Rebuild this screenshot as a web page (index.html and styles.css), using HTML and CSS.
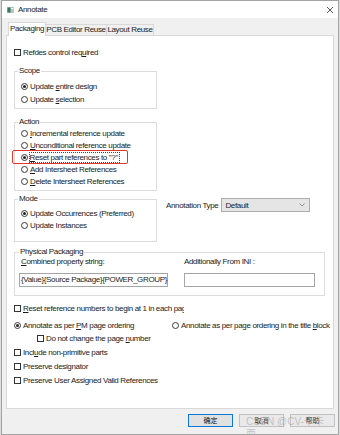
FILE: index.html
```html
<!DOCTYPE html>
<html lang="en">
<head>
    <meta charset="UTF-8">
    <title>Annotate</title>
    <link rel="stylesheet" href="styles.css">
</head>
<body>
    <div class="window">
        <div class="titlebar">
            <svg class="app-icon" width="7" height="6" viewBox="0 0 7 6">
                <rect x="0" y="0" width="7" height="6" fill="#b9c2c6"/>
                <rect x="0.5" y="0.5" width="3" height="5" fill="#2f7d62"/>
                <rect x="4" y="1" width="2.5" height="1" fill="#ffffff"/>
            </svg>
            <span class="title">Annotate</span>
            <svg class="close" width="8" height="8" viewBox="0 0 8 8">
                <path d="M1 1 L7 7 M7 1 L1 7" stroke="#444" stroke-width="0.9"/>
            </svg>
        </div>

        <div class="tabs">
            <div class="tab active">Packaging</div>
            <div class="tab tab-pcb">PCB Editor Reuse</div>
            <div class="tab tab-layout">Layout Reuse</div>
        </div>

        <div class="panel">
            <label class="opt refdes"><span class="box"></span><span>Refdes control req<u>u</u>ired</span></label>

            <fieldset class="group scope">
                <legend>Scope</legend>
                <label class="opt"><span class="radio on"></span><span>Update <u>e</u>ntire design</span></label>
                <label class="opt"><span class="radio"></span><span>Update <u>s</u>election</span></label>
            </fieldset>

            <fieldset class="group action">
                <legend>Action</legend>
                <label class="opt"><span class="radio"></span><span><u>I</u>ncremental reference update</span></label>
                <label class="opt"><span class="radio"></span><span><u>U</u>nconditional reference update</span></label>
                <label class="opt marked"><span class="radio on"></span><span class="focus"><u>R</u>eset part references to "?"</span></label>
                <label class="opt"><span class="radio"></span><span><u>A</u>dd Intersheet References</span></label>
                <label class="opt"><span class="radio"></span><span><u>D</u>elete Intersheet References</span></label>
            </fieldset>

            <div class="mode-row">
                <fieldset class="group mode">
                    <legend>Mode</legend>
                    <label class="opt"><span class="radio on"></span><span>Update Occurrences (Preferred)</span></label>
                    <label class="opt"><span class="radio"></span><span>Update Instances</span></label>
                </fieldset>
                <div class="anno-type">
                    <span>Annotation Type</span>
                    <div class="select">
                        <span>Default</span>
                        <svg width="6" height="4" viewBox="0 0 6 4">
                            <path d="M0.5 0.5 L3 3 L5.5 0.5" fill="none" stroke="#777" stroke-width="0.8"/>
                        </svg>
                    </div>
                </div>
            </div>

            <fieldset class="group physical">
                <legend>Physical Packaging</legend>
                <div class="pp-cols">
                    <div class="pp-col pp-left">
                        <div class="pp-label"><u>C</u>ombined property string:</div>
                        <div class="textbox">{Value}{Source Package}{POWER_GROUP}</div>
                    </div>
                    <div class="pp-col pp-right">
                        <div class="pp-label">Additionally From INI :</div>
                        <div class="textbox"></div>
                    </div>
                </div>
            </fieldset>

            <label class="opt reset-num"><span class="box"></span><span><u>R</u>eset reference numbers to begin at 1 in each page</span></label>

            <div class="ordering">
                <label class="opt order-pm"><span class="radio on"></span><span>Annotate as per <u>P</u>M page ordering</span></label>
                <label class="opt"><span class="radio"></span><span>Annotate as per page ordering in the title <u>b</u>lock</span></label>
            </div>
            <label class="opt page-num"><span class="box"></span><span>Do not change the page <u>n</u>umber</span></label>

            <label class="opt tail"><span class="box"></span><span>Incl<u>u</u>de non-primitive parts</span></label>
            <label class="opt tail"><span class="box"></span><span>Preserve designator</span></label>
            <label class="opt tail"><span class="box"></span><span>Preserve User Assigned Valid References</span></label>
        </div>

        <div class="footer">
            <button class="btn default">确定</button>
            <button class="btn">取消</button>
            <button class="btn">帮助</button>
        </div>

        <div class="watermark">CSDN @CV-卡卡西。</div>
    </div>
</body>
</html>
```

FILE: styles.css
```css
body {
    margin: 0;
    background-color: #dcdcdc;
    font-family: 'Liberation Sans', Arial, 'Noto Sans CJK SC', sans-serif;
    font-size: 8px;
    letter-spacing: -0.35px;
    color: #1b1b1b;
}

.window {
    position: relative;
    width: 336px;
    height: 433px;
    margin-left: 1px;
    border: 1px solid #a3a3a3;
    background-color: #f0f0f0;
    overflow: hidden;
}

/* title bar */
.titlebar {
    height: 17px;
    display: flex;
    align-items: center;
    background-color: #fff;
    padding-left: 5px;
    padding-right: 4px;
}

.app-icon {
    margin-right: 4px;
}

.title {
    flex: 1;
    color: #222;
}

/* tabs */
.tabs {
    height: 17px;
    display: flex;
    align-items: flex-end;
    padding-left: 6px;
}

.tab {
    box-sizing: border-box;
    height: 11px;
    line-height: 10px;
    border: 1px solid #d9d9d9;
    border-bottom: none;
    border-left: none;
    text-align: center;
    color: #222;
}

.tab.active {
    position: relative;
    z-index: 1;
    width: 38px;
    height: 14px;
    line-height: 12px;
    margin-bottom: -1px;
    border-left: 1px solid #d9d9d9;
    background-color: #fff;
}

.tab-pcb {
    width: 61px;
}

.tab-layout {
    width: 47px;
}

/* main panel */
.panel {
    height: 372px;
    margin: 0 4px;
    padding-left: 7px;
    border: 1px solid #d9d9d9;
    background-color: #fff;
    white-space: nowrap;
    overflow: hidden;
}

.opt {
    display: flex;
    align-items: center;
    height: 12px;
}

.box,
.radio {
    box-sizing: border-box;
    flex: none;
    width: 7px;
    height: 7px;
    margin-right: 2px;
    border: 1px solid #333;
    background-color: #fff;
}

.radio {
    position: relative;
    border-radius: 50%;
    border-color: #3a3a3a;
}

.radio.on::after {
    content: '';
    position: absolute;
    left: 1px;
    top: 1px;
    width: 3px;
    height: 3px;
    border-radius: 50%;
    background-color: #222;
}

u {
    text-decoration-thickness: 1px;
    text-underline-offset: 1px;
}

.refdes {
    margin-top: 10px;
}

/* group boxes */
.group {
    box-sizing: border-box;
    width: 143px;
    margin: 0;
    border: 1px solid #dcdcdc;
    padding: 0 0 0 6px;
}

.group legend {
    line-height: 10px;
    padding: 0 1px;
    margin-left: -3px;
    color: #222;
}

.scope {
    margin-top: 8px;
    padding-top: 4px;
    padding-bottom: 3px;
}

.scope .opt + .opt {
    margin-top: 1px;
}

.action {
    margin-top: 8px;
    padding-bottom: 3px;
}

.marked {
    box-sizing: border-box;
    width: 116px;
    height: 14px;
    margin: -1px 0 -1px -9px;
    padding-left: 7.5px;
    border: 1.5px solid #e5352b;
    border-radius: 2px;
}

.focus {
    outline: 1px dotted #444;
    padding-right: 1px;
}

.mode-row {
    display: flex;
    align-items: flex-start;
    margin-top: 3px;
}

.mode {
    padding-top: 3px;
    padding-bottom: 10px;
}

.anno-type {
    display: flex;
    align-items: center;
    margin-top: 4px;
    margin-left: 9px;
}

.select {
    box-sizing: border-box;
    display: flex;
    align-items: center;
    justify-content: space-between;
    width: 89px;
    height: 14px;
    margin-left: 3px;
    padding: 0 4px 0 3px;
    border: 1px solid #adadad;
    background-color: #e5e5e5;
}

/* physical packaging */
.physical {
    width: 311px;
    margin-top: 5px;
    padding: 0 0 8px 4px;
}

.physical legend {
    margin-left: 0;
}

.pp-cols {
    display: flex;
}

.pp-label {
    height: 10px;
    line-height: 10px;
    padding-left: 2px;
}

.textbox {
    box-sizing: border-box;
    height: 14px;
    margin-top: 6px;
    padding-left: 1px;
    line-height: 12px;
    border: 1px solid #a5a5a5;
    background-color: #fff;
}

.pp-left .textbox {
    width: 149px;
}

.pp-right {
    margin-left: 16px;
}

.pp-right .pp-label {
    padding-left: 0;
}

.pp-right .textbox {
    width: 131px;
}

/* bottom options */
.reset-num {
    width: 170px;
    margin-top: 6px;
    overflow: hidden;
}

.ordering {
    display: flex;
    margin-top: 5px;
}

.order-pm {
    width: 158px;
}

.page-num {
    margin-top: 1px;
    margin-left: 23px;
}

.tail {
    margin-top: 2px;
}

/* footer buttons */
.footer {
    display: flex;
    justify-content: flex-end;
    gap: 6px;
    padding-top: 5px;
    padding-right: 3px;
}

.btn {
    box-sizing: border-box;
    width: 45px;
    height: 13px;
    padding: 0;
    border: 1px solid #c2c2c2;
    background-color: #e9e9e9;
    font-family: 'Noto Sans CJK SC', sans-serif;
    font-size: 7px;
    line-height: 11px;
    color: #333;
}

.btn.default {
    border-color: #0a78d4;
    background-color: #e1e1e1;
    color: #111;
}

.watermark {
    position: absolute;
    left: 244px;
    top: 415px;
    font-family: 'Liberation Sans', 'Noto Sans CJK SC', sans-serif;
    font-size: 10px;
    line-height: 12px;
    letter-spacing: 0;
    color: rgba(150, 150, 150, 0.5);
}
```
